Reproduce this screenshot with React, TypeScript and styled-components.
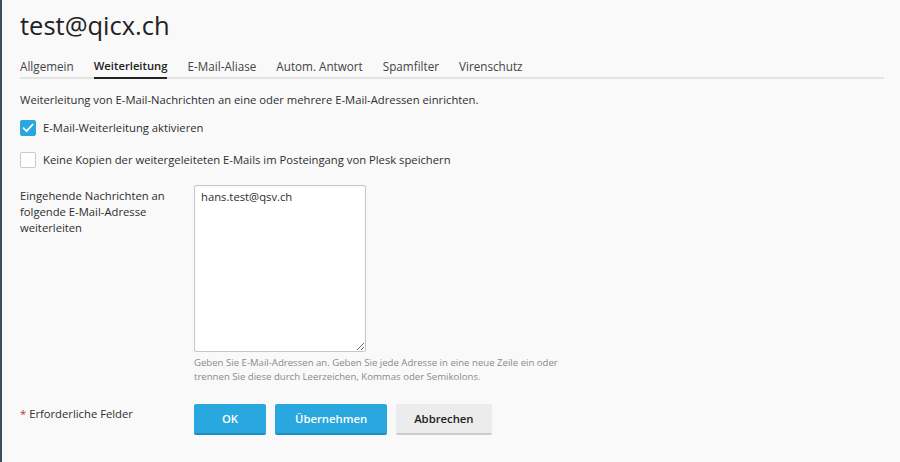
import React from "react";
import styled, { createGlobalStyle } from "styled-components";

const Global = createGlobalStyle`
  html, body { margin: 0; padding: 0; background: #f9f9f9; }
  body { font-family: "Open Sans", "Noto Sans", sans-serif; color: #333; }
  * { box-sizing: border-box; }
`;

const Shell = styled.div`
  display: flex;
  width: 900px;
  height: 462px;
  overflow: hidden;
  background: #f9f9f9;
`;

const EdgeStrip = styled.div`
  width: 2px;
  flex: none;
  background: #3e4c5a;
`;

const Main = styled.main`
  flex: 1;
  padding: 8px 16px 0 18px;
  display: flex;
  flex-direction: column;
`;

const Title = styled.h1`
  margin: 0;
  font-size: 25.5px;
  line-height: 34px;
  font-weight: 400;
  color: #222;
`;

const TabBar = styled.nav`
  margin-top: 16px;
  display: flex;
  gap: 20px;
  border-bottom: 2px solid #e3e3e3;
`;

const Tab = styled.span<{ $active?: boolean }>`
  font-size: ${(p) => (p.$active ? "11.25px" : "11.7px")};
  line-height: 16px;
  padding-bottom: 3px;
  margin-bottom: -2px;
  color: ${(p) => (p.$active ? "#222" : "#444")};
  font-weight: ${(p) => (p.$active ? 600 : 400)};
  border-bottom: 2px solid ${(p) => (p.$active ? "#222" : "transparent")};
`;

const Intro = styled.p`
  margin: 12px 0 0;
  font-size: 11.25px;
  line-height: 18px;
  color: #2e2e2e;
`;

const CheckRow = styled.label<{ $top: number }>`
  margin-top: ${(p) => p.$top}px;
  display: flex;
  align-items: center;
  gap: 7px;
  font-size: 11.25px;
  line-height: 16px;
  color: #2e2e2e;
`;

const Box = styled.span<{ $checked?: boolean }>`
  width: 16px;
  height: 16px;
  flex: none;
  border-radius: 2px;
  display: flex;
  align-items: center;
  justify-content: center;
  background: ${(p) => (p.$checked ? "#29a8df" : "#fff")};
  border: 1px solid ${(p) => (p.$checked ? "#29a8df" : "#c9c9c9")};
`;

const FormRow = styled.div<{ $top: number }>`
  margin-top: ${(p) => p.$top}px;
  display: flex;
`;

const FieldLabel = styled.div`
  width: 174px;
  flex: none;
  padding: 3px 20px 0 0;
  font-size: 11.25px;
  line-height: 16px;
  color: #2e2e2e;
`;

const FieldCol = styled.div`
  display: flex;
  flex-direction: column;
`;

const TextArea = styled.textarea`
  width: 172px;
  height: 167px;
  margin: 0;
  padding: 3px 6px;
  border: 1px solid #c6c6c6;
  border-radius: 2px;
  background: #fff;
  font-family: "Open Sans", "Noto Sans", sans-serif;
  font-size: 11.25px;
  line-height: 16px;
  color: #2e2e2e;
  resize: both;
  box-shadow: inset 0 1px 2px rgba(0, 0, 0, 0.04);
`;

const Hint = styled.div`
  margin-top: 4px;
  width: 380px;
  font-size: 9.6px;
  line-height: 14px;
  color: #8a8a8a;
`;

const Required = styled.div`
  width: 174px;
  flex: none;
  padding-top: 2px;
  font-size: 11.25px;
  line-height: 16px;
  color: #2e2e2e;
`;

const Star = styled.span`
  color: #d0283a;
`;

const Buttons = styled.div`
  display: flex;
  gap: 9px;
`;

const Button = styled.button<{ $primary?: boolean }>`
  height: 31px;
  min-width: 72px;
  padding: 0 ${(p) => (p.$primary ? 20 : 18)}px;
  border: none;
  border-radius: 2px;
  font-family: "Open Sans", "Noto Sans", sans-serif;
  font-size: 11.3px;
  font-weight: 600;
  color: ${(p) => (p.$primary ? "#fff" : "#222")};
  background: ${(p) => (p.$primary ? "#28a8df" : "#ececec")};
  border-bottom: 2px solid ${(p) => (p.$primary ? "#1c8ec2" : "#cbcbcb")};
  cursor: pointer;
`;

const tabs = [
  "Allgemein",
  "Weiterleitung",
  "E-Mail-Aliase",
  "Autom. Antwort",
  "Spamfilter",
  "Virenschutz",
];

function Check() {
  return (
    <svg width="12" height="10" viewBox="0 0 12 10" fill="none">
      <path d="M1.5 5.2 L4.6 8.2 L10.6 1.5" stroke="#fff" strokeWidth="1.8" strokeLinecap="round" strokeLinejoin="round" />
    </svg>
  );
}

export default function App() {
  return (
    <>
      <Global />
      <Shell>
        <EdgeStrip />
        <Main>
          <Title>test@qicx.ch</Title>
          <TabBar>
            {tabs.map((t) => (
              <Tab key={t} $active={t === "Weiterleitung"}>
                {t}
              </Tab>
            ))}
          </TabBar>
          <Intro>Weiterleitung von E-Mail-Nachrichten an eine oder mehrere E-Mail-Adressen einrichten.</Intro>
          <CheckRow $top={11}>
            <Box $checked>
              <Check />
            </Box>
            E-Mail-Weiterleitung aktivieren
          </CheckRow>
          <CheckRow $top={16}>
            <Box />
            Keine Kopien der weitergeleiteten E-Mails im Posteingang von Plesk speichern
          </CheckRow>
          <FormRow $top={17}>
            <FieldLabel>Eingehende Nachrichten an folgende E-Mail-Adresse weiterleiten</FieldLabel>
            <FieldCol>
              <TextArea defaultValue="hans.test@qsv.ch" />
              <Hint>
                Geben Sie E-Mail-Adressen an. Geben Sie jede Adresse in eine neue Zeile ein oder trennen Sie diese durch Leerzeichen, Kommas oder Semikolons.
              </Hint>
            </FieldCol>
          </FormRow>
          <FormRow $top={20}>
            <Required>
              <Star>*</Star> Erforderliche Felder
            </Required>
            <Buttons>
              <Button $primary>OK</Button>
              <Button $primary>Übernehmen</Button>
              <Button>Abbrechen</Button>
            </Buttons>
          </FormRow>
        </Main>
      </Shell>
    </>
  );
}
